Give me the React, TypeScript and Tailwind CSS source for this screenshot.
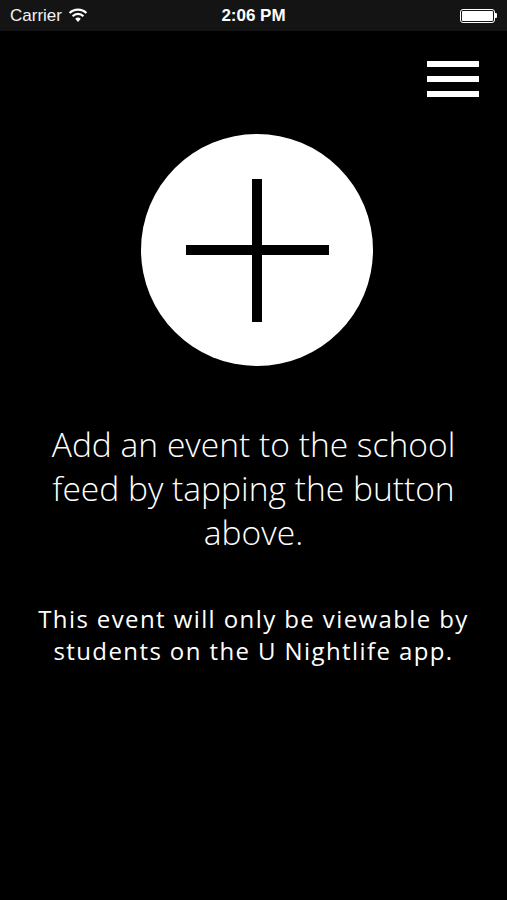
import React from "react";

function Wifi() {
  return (
    <svg width="20" height="15" viewBox="0 0 20 15" className="ml-[6px]">
      <path d="M10 14 L7.2 10.8 A4 4 0 0 1 12.8 10.8 Z" fill="#fff" />
      <path d="M4.6 8.2 A7.6 7.6 0 0 1 15.4 8.2" stroke="#fff" strokeWidth="2.2" fill="none" />
      <path d="M1.6 5 A12 12 0 0 1 18.4 5" stroke="#fff" strokeWidth="2.2" fill="none" />
    </svg>
  );
}

function Battery() {
  return (
    <div className="flex items-center">
      <div className="w-[35px] h-[14px] rounded-[3px] border border-white p-[1px]">
        <div className="w-full h-full bg-white rounded-[1px]" />
      </div>
      <div className="w-[2px] h-[5px] bg-white rounded-r-[1px]" />
    </div>
  );
}

export default function App() {
  return (
    <div className="w-[507px] h-[900px] bg-black flex flex-col text-white">
      <div className="h-[31px] bg-[#141414] flex items-center px-[10px] relative font-['Liberation_Sans',sans-serif] text-[17px]">
        <span className="text-[#f2f2f2]">Carrier</span>
        <Wifi />
        <span className="absolute left-0 right-0 text-center font-bold text-[17px] pointer-events-none">2:06 PM</span>
        <div className="ml-auto">
          <Battery />
        </div>
      </div>

      <div className="flex justify-end pr-[28px] pt-[30px]">
        <div className="flex flex-col gap-[9px] w-[52px]">
          <div className="h-[6px] bg-white" />
          <div className="h-[6px] bg-white" />
          <div className="h-[6px] bg-white" />
        </div>
      </div>

      <div className="flex justify-center mt-[37px]">
        <button className="w-[232px] h-[232px] rounded-full bg-white relative flex items-center justify-center ml-[7px]">
          <div className="absolute w-[143px] h-[10px] bg-black" />
          <div className="absolute w-[10px] h-[143px] bg-black" />
        </button>
      </div>

      <p className="mt-[56px] px-[28px] text-center text-[33.6px] leading-[44px] font-['Open_Sans',sans-serif] font-light">
        Add an event to the school feed by tapping the button above.
      </p>

      <p className="mt-[49px] px-[16px] text-center text-[24px] leading-[32px] tracking-[1.4px] font-['Open_Sans',sans-serif]">
        This event will only be viewable by students on the U Nightlife app.
      </p>
    </div>
  );
}
